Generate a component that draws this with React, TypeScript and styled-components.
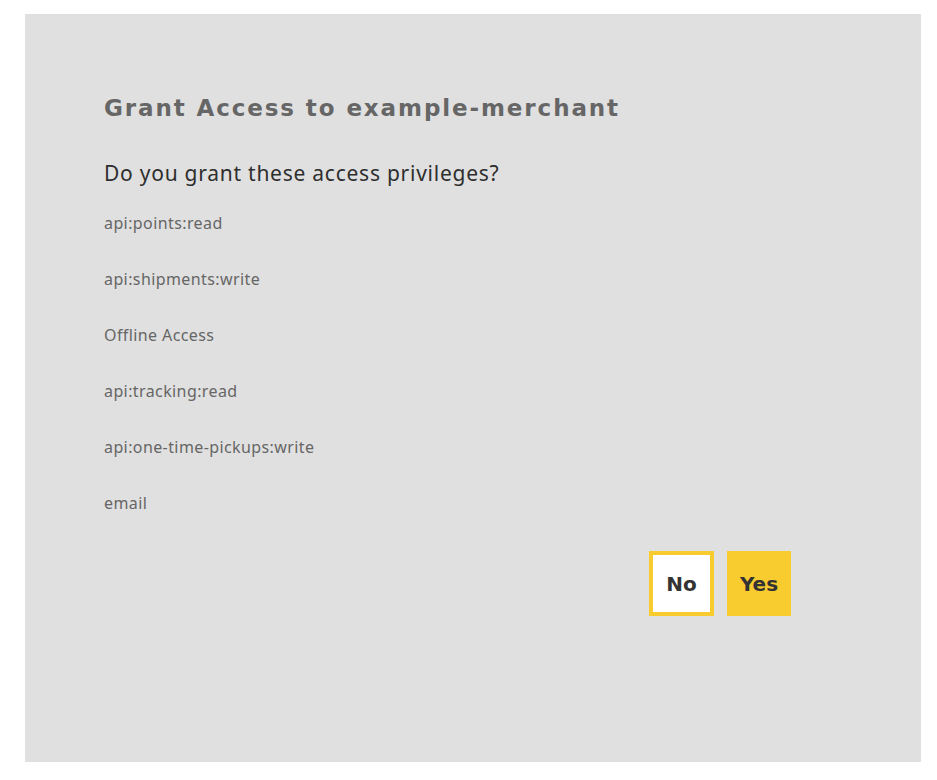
import React from 'react';
import styled, { createGlobalStyle } from 'styled-components';

const GlobalStyle = createGlobalStyle`
  html, body {
    margin: 0;
    padding: 0;
    background: #ffffff;
  }
  body {
    font-family: 'Open Sans', 'Liberation Sans', sans-serif;
  }
`;

const Page = styled.div`
  padding: 14px 16px 18px 25px;
`;

const Panel = styled.div`
  background: #e0e0e0;
  width: 896px;
  height: 748px;
  box-sizing: border-box;
  padding: 80px 130px 0 79px;
`;

const Title = styled.h1`
  margin: 0;
  font-family: 'DejaVu Sans', sans-serif;
  font-weight: 700;
  font-size: 23px;
  line-height: 28px;
  color: #666666;
  letter-spacing: 1.9px;
`;

const Question = styled.h2`
  margin: 37px 0 0;
  font-family: 'Noto Sans', sans-serif;
  font-weight: 400;
  font-size: 21px;
  line-height: 28px;
  color: #2e2e2e;
  letter-spacing: 0.75px;
`;

const ScopeList = styled.ul`
  list-style: none;
  margin: 24px 0 0;
  padding: 0;
  display: flex;
  flex-direction: column;
  gap: 32px;
`;

const Scope = styled.li`
  font-family: 'Noto Sans', sans-serif;
  font-size: 16px;
  line-height: 24px;
  color: #666666;
  letter-spacing: 0.4px;
`;

const Actions = styled.div`
  display: flex;
  justify-content: flex-end;
  gap: 13px;
  margin-top: 36px;
`;

const Choice = styled.button<{ $primary?: boolean }>`
  width: ${p => (p.$primary ? '64px' : '65px')};
  height: 65px;
  box-sizing: border-box;
  border: 4px solid #f8cb2e;
  background: ${p => (p.$primary ? '#f8cb2e' : '#ffffff')};
  color: #333333;
  font-family: 'DejaVu Sans', sans-serif;
  font-weight: 700;
  font-size: 20px;
  padding: 0;
  cursor: pointer;
`;

const scopes = [
  'api:points:read',
  'api:shipments:write',
  'Offline Access',
  'api:tracking:read',
  'api:one-time-pickups:write',
  'email',
];

export default function App() {
  return (
    <Page>
      <GlobalStyle />
      <Panel>
        <Title>Grant Access to example-merchant</Title>
        <Question>Do you grant these access privileges?</Question>
        <ScopeList>
          {scopes.map(s => (
            <Scope key={s}>{s}</Scope>
          ))}
        </ScopeList>
        <Actions>
          <Choice>No</Choice>
          <Choice $primary>Yes</Choice>
        </Actions>
      </Panel>
    </Page>
  );
}
